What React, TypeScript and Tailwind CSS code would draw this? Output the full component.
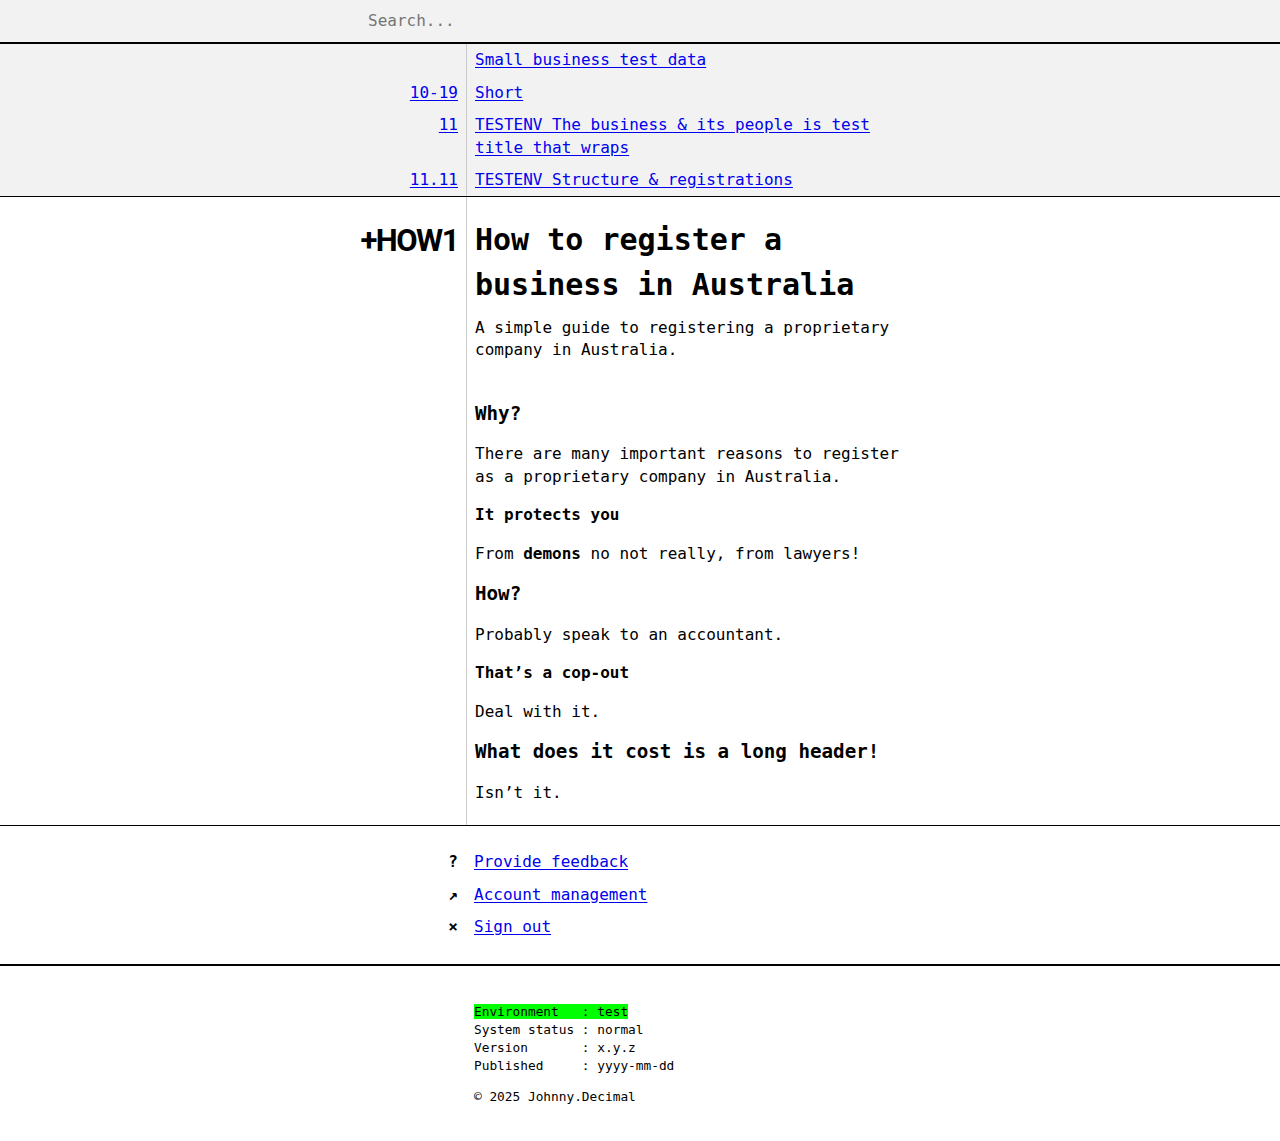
import React from "react";

const mono = "font-['DejaVu_Sans_Mono','Liberation_Mono',monospace]";

const navRows = [
  { id: "", title: "Small business test data" },
  { id: "10-19", title: "Short" },
  { id: "11", title: "TESTENV The business & its people is test title that wraps" },
  { id: "11.11", title: "TESTENV Structure & registrations" },
];

const footerLinks = [
  { icon: "?", label: "Provide feedback" },
  { icon: "↗", label: "Account management" },
  { icon: "×", label: "Sign out" },
];

const App = () => {
  return (
    <div className={`min-h-[1141px] bg-white text-black ${mono}`}>
      {/* search */}
      <div className="h-[44px] bg-[#f2f2f2] border-b-2 border-black flex items-center pl-[368px]">
        <input
          className={`bg-transparent outline-none text-[16px] w-[400px] placeholder:text-[#757575] ${mono}`}
          placeholder="Search..."
        />
      </div>

      {/* breadcrumbs */}
      <div className="bg-[#f2f2f2] border-b border-black">
        {navRows.map((row, i) => (
          <div key={row.title} className="grid grid-cols-[466px_1fr] text-[16px] leading-[24px]">
            <div className={`text-right pr-2 ${i === 0 || i === 2 ? "pt-1 pb-[5px]" : "py-1"}`}>
              {row.id && (
                <a href="#" className="text-[#0000ee] underline underline-offset-2">
                  {row.id}
                </a>
              )}
            </div>
            <div className={`border-l border-[#cccccc] pl-2 ${i === 0 || i === 2 ? "pt-1 pb-[5px]" : "py-1"}`}>
              <a
                href="#"
                className={`text-[#0000ee] underline underline-offset-2 block max-w-[440px] ${i === 2 ? "leading-[23px]" : ""}`}
              >
                {row.title}
              </a>
            </div>
          </div>
        ))}
      </div>

      {/* article */}
      <div className="grid grid-cols-[466px_1fr] border-b border-black">
        <div className="text-right pr-2 pt-[21px]">
          <span className="font-['Roboto',sans-serif] font-bold text-[31px] leading-[45px] tracking-[-1.5px]">
            +HOW1
          </span>
        </div>
        <div className="border-l border-[#cccccc] pl-2 pt-[20px] pb-[21px]">
          <div className="max-w-[440px] flex flex-col">
            <h1 className="text-[30px] leading-[45px] font-bold">How to register a business in Australia</h1>
            <p className="text-[16px] leading-[22px] mt-[10px]">
              A simple guide to registering a proprietary company in Australia.
            </p>
            <h2 className="text-[19.2px] leading-[24px] font-bold mt-[41px]">Why?</h2>
            <p className="text-[16px] leading-[23px] mt-[16px]">
              There are many important reasons to register as a proprietary company in Australia.
            </p>
            <h3 className="text-[16px] leading-[23px] font-bold mt-[15px]">It protects you</h3>
            <p className="text-[16px] leading-[23px] mt-[16px]">
              From <strong>demons</strong> no not really, from lawyers!
            </p>
            <h2 className="text-[19.2px] leading-[24px] font-bold mt-[17px]">How?</h2>
            <p className="text-[16px] leading-[23px] mt-[17px]">Probably speak to an accountant.</p>
            <h3 className="text-[16px] leading-[23px] font-bold mt-[15px]">That’s a cop-out</h3>
            <p className="text-[16px] leading-[23px] mt-[16px]">Deal with it.</p>
            <h2 className="text-[19.2px] leading-[24px] font-bold mt-[17px]">What does it cost is a long header!</h2>
            <p className="text-[16px] leading-[23px] mt-[17px]">Isn’t it.</p>
          </div>
        </div>
      </div>

      {/* footer links */}
      <div className="border-b-2 border-black pt-[24px] pb-[25px] flex flex-col gap-[8.5px]">
        {footerLinks.map((l) => (
          <div key={l.label} className="grid grid-cols-[466px_1fr] text-[16px] leading-[24px]">
            <div className="text-right pr-2 font-bold">{l.icon}</div>
            <div className="pl-2">
              <a href="#" className="text-[#0000ee] underline underline-offset-2">
                {l.label}
              </a>
            </div>
          </div>
        ))}
      </div>

      {/* meta */}
      <div className="pl-[474px] pt-[37px] pb-[36px] text-[12.8px] leading-[18px] whitespace-pre">
        <div>
          <span className="bg-[#00ff00]">{"Environment   : test"}</span>
        </div>
        <div>{"System status : normal"}</div>
        <div>{"Version       : x.y.z"}</div>
        <div>{"Published     : yyyy-mm-dd"}</div>
        <div className="mt-[13px]">© 2025 Johnny.Decimal</div>
      </div>
    </div>
  );
};

export default App;
